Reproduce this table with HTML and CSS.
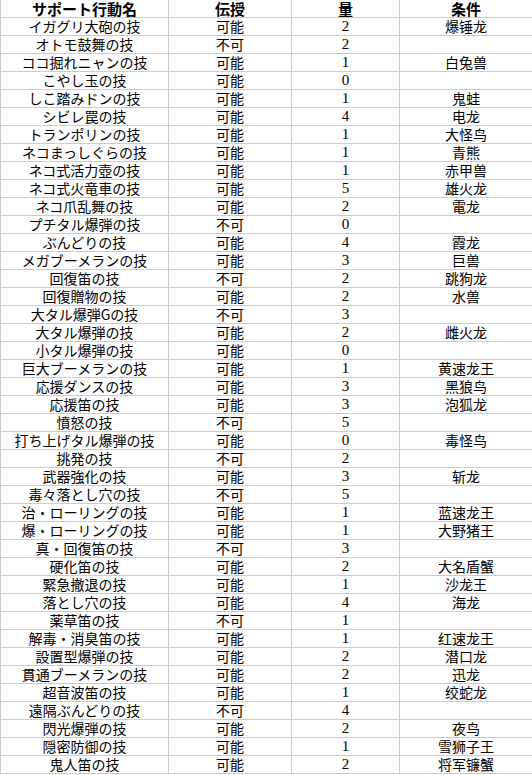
FILE: index.html
```html
<!DOCTYPE html>
<html lang="ja">
<head>
<meta charset="utf-8">
<link rel="stylesheet" href="styles.css">
</head>
<body>
<table class="sheet">
<colgroup><col class="c1"><col class="c2"><col class="c3"><col class="c4"></colgroup>
<thead>
<tr><th>サポート行動名</th><th>伝授</th><th>量</th><th>条件</th></tr>
</thead>
<tbody>
<tr><td>イガグリ大砲の技</td><td>可能</td><td class="n">2</td><td class="zh">爆锤龙</td></tr>
<tr><td>オトモ鼓舞の技</td><td>不可</td><td class="n">2</td><td class="zh"></td></tr>
<tr><td>ココ掘れニャンの技</td><td>可能</td><td class="n">1</td><td class="zh">白兔兽</td></tr>
<tr><td>こやし玉の技</td><td>可能</td><td class="n">0</td><td class="zh"></td></tr>
<tr><td>しこ踏みドンの技</td><td>可能</td><td class="n">1</td><td class="zh">鬼蛙</td></tr>
<tr><td>シビレ罠の技</td><td>可能</td><td class="n">4</td><td class="zh">电龙</td></tr>
<tr><td>トランポリンの技</td><td>可能</td><td class="n">1</td><td class="zh">大怪鸟</td></tr>
<tr><td>ネコまっしぐらの技</td><td>可能</td><td class="n">1</td><td class="zh">青熊</td></tr>
<tr><td>ネコ式活力壺の技</td><td>可能</td><td class="n">1</td><td class="zh">赤甲兽</td></tr>
<tr><td>ネコ式火竜車の技</td><td>可能</td><td class="n">5</td><td class="zh">雄火龙</td></tr>
<tr><td>ネコ爪乱舞の技</td><td>可能</td><td class="n">2</td><td class="zh">電龙</td></tr>
<tr><td>プチタル爆弾の技</td><td>不可</td><td class="n">0</td><td class="zh"></td></tr>
<tr><td>ぶんどりの技</td><td>可能</td><td class="n">4</td><td class="zh">霞龙</td></tr>
<tr><td>メガブーメランの技</td><td>可能</td><td class="n">3</td><td class="zh">巨兽</td></tr>
<tr><td>回復笛の技</td><td>不可</td><td class="n">2</td><td class="zh">跳狗龙</td></tr>
<tr><td>回復贈物の技</td><td>可能</td><td class="n">2</td><td class="zh">水兽</td></tr>
<tr><td>大タル爆弾Gの技</td><td>不可</td><td class="n">3</td><td class="zh"></td></tr>
<tr><td>大タル爆弾の技</td><td>可能</td><td class="n">2</td><td class="zh">雌火龙</td></tr>
<tr><td>小タル爆弾の技</td><td>可能</td><td class="n">0</td><td class="zh"></td></tr>
<tr><td>巨大ブーメランの技</td><td>可能</td><td class="n">1</td><td class="zh">黄速龙王</td></tr>
<tr><td>応援ダンスの技</td><td>可能</td><td class="n">3</td><td class="zh">黑狼鸟</td></tr>
<tr><td>応援笛の技</td><td>可能</td><td class="n">3</td><td class="zh">泡狐龙</td></tr>
<tr><td>憤怒の技</td><td>不可</td><td class="n">5</td><td class="zh"></td></tr>
<tr><td>打ち上げタル爆弾の技</td><td>可能</td><td class="n">0</td><td class="zh">毒怪鸟</td></tr>
<tr><td>挑発の技</td><td>不可</td><td class="n">2</td><td class="zh"></td></tr>
<tr><td>武器強化の技</td><td>可能</td><td class="n">3</td><td class="zh">斩龙</td></tr>
<tr><td>毒々落とし穴の技</td><td>不可</td><td class="n">5</td><td class="zh"></td></tr>
<tr><td>治・ローリングの技</td><td>可能</td><td class="n">1</td><td class="zh">蓝速龙王</td></tr>
<tr><td>爆・ローリングの技</td><td>可能</td><td class="n">1</td><td class="zh">大野猪王</td></tr>
<tr><td>真・回復笛の技</td><td>不可</td><td class="n">3</td><td class="zh"></td></tr>
<tr><td>硬化笛の技</td><td>可能</td><td class="n">2</td><td class="zh">大名盾蟹</td></tr>
<tr><td>緊急撤退の技</td><td>可能</td><td class="n">1</td><td class="zh">沙龙王</td></tr>
<tr><td>落とし穴の技</td><td>可能</td><td class="n">4</td><td class="zh">海龙</td></tr>
<tr><td>薬草笛の技</td><td>不可</td><td class="n">1</td><td class="zh"></td></tr>
<tr><td>解毒・消臭笛の技</td><td>可能</td><td class="n">1</td><td class="zh">红速龙王</td></tr>
<tr><td>設置型爆弾の技</td><td>可能</td><td class="n">2</td><td class="zh">潜口龙</td></tr>
<tr><td>貫通ブーメランの技</td><td>可能</td><td class="n">2</td><td class="zh">迅龙</td></tr>
<tr><td>超音波笛の技</td><td>可能</td><td class="n">1</td><td class="zh">绞蛇龙</td></tr>
<tr><td>遠隔ぶんどりの技</td><td>不可</td><td class="n">4</td><td class="zh"></td></tr>
<tr><td>閃光爆弾の技</td><td>可能</td><td class="n">2</td><td class="zh">夜鸟</td></tr>
<tr><td>隠密防御の技</td><td>可能</td><td class="n">1</td><td class="zh">雪狮子王</td></tr>
<tr><td>鬼人笛の技</td><td>可能</td><td class="n">2</td><td class="zh">将军镰蟹</td></tr>
</tbody>
</table>
</body>
</html>
```
FILE: styles.css
```css
html, body {
  margin: 0;
  padding: 0;
  background: #ffffff;
}
.sheet {
  border-collapse: collapse;
  table-layout: fixed;
  width: 532px;
  font-family: "Noto Sans CJK JP", "Noto Sans CJK SC", sans-serif;
  font-size: 14px;
  color: #000;
}
.c1 { width: 168px; }
.c2 { width: 123px; }
.c3 { width: 108px; }
.c4 { width: 133px; }
.sheet th, .sheet td {
  border: 1px solid #cccccc;
  padding: 0;
  height: 17px;
  line-height: 17px;
  text-align: center;
  white-space: nowrap;
}
.sheet th {
  font-weight: bold;
  font-size: 15px;
  border-top: none;
}
.sheet td.zh {
  font-family: "Noto Sans CJK SC", sans-serif;
}
.sheet td.n {
  font-family: "Liberation Serif", serif;
  font-size: 15px;
}
```
